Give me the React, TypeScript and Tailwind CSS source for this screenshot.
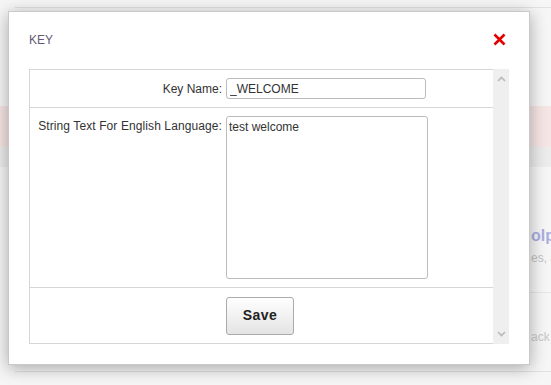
import { useState } from 'react'

function CloseIcon() {
  return (
    <svg width="13" height="13" viewBox="0 0 13 13">
      <path d="M1.5 1.5 L11.5 11.5 M11.5 1.5 L1.5 11.5" stroke="#e30000" strokeWidth="2.6" strokeLinecap="butt" />
    </svg>
  )
}

function Chevron({ up }: { up?: boolean }) {
  return (
    <svg width="9" height="6" viewBox="0 0 9 6">
      <path
        d={up ? 'M1 5 L4.5 1.5 L8 5' : 'M1 1 L4.5 4.5 L8 1'}
        fill="none"
        stroke="#b9b9b9"
        strokeWidth="1.6"
      />
    </svg>
  )
}

export default function App() {
  const [keyName, setKeyName] = useState('_WELCOME')
  const [text, setText] = useState('test welcome')

  return (
    <div className="relative w-[551px] h-[385px] overflow-hidden bg-[#f6f6f6] font-['Liberation_Sans',Arial,sans-serif] text-[12px] text-[#333]">
      {/* ============ PAGE BEHIND ============ */}
      <div className="h-[7px]" />
      <div className="ml-[15px] border-t border-[#e2e2e2]" />
      <div className="h-[98px]" />
      <div className="h-[41px] bg-[#f6e5e5]" />
      <div className="h-[20px] bg-[#ececec]" />
      <div className="h-[60px]" />
      <div className="pl-[531px] whitespace-nowrap text-[16px] font-bold leading-[18px] text-[#a8aee2]">olp</div>
      <div className="pl-[531px] pt-[6px] whitespace-nowrap leading-[14px] text-[#c2c2c2]">es, a</div>
      <div className="h-[27px]" />
      <div className="ml-[530px] border-t border-[#e6e6e6]" />
      <div className="pl-[531px] pt-[37px] whitespace-nowrap leading-[14px] text-[#c8c8c8]">ack</div>
      <div className="h-[27px]" />
      <div className="ml-[15px] border-t border-[#e2e2e2]" />

      {/* ============ MODAL ============ */}
      <div className="absolute left-[8px] top-[11px] w-[522px] h-[354px] bg-white border border-[#c9c9c9] shadow-[0_3px_16px_rgba(0,0,0,0.32)] px-[20px]">
        <div className="h-[57px] flex justify-between pt-[21px]">
          <span className="text-[12px] leading-[14px] text-[#625a74]">KEY</span>
          <span className="mr-[3px]">
            <CloseIcon />
          </span>
        </div>

        <div className="flex h-[275px]">
          <div className="flex-1 flex flex-col border border-r-0 border-[#d6d6d6]">
            <div className="h-[38px] flex items-center border-b border-[#d6d6d6]">
              <label className="w-[192px] text-right">Key Name:</label>
              <input
                value={keyName}
                onChange={e => setKeyName(e.target.value)}
                className="ml-[4px] w-[200px] h-[21px] px-[3px] border border-[#bcbcbc] rounded-[3px] text-[12px] text-[#333] outline-none"
              />
            </div>
            <div className="h-[180px] flex items-start pt-[8px] border-b border-[#d6d6d6]">
              <label className="w-[192px] text-right pt-[3px] leading-[14px] tracking-[0.1px]">String Text For English Language:</label>
              <textarea
                value={text}
                onChange={e => setText(e.target.value)}
                className="ml-[4px] w-[202px] h-[163px] px-[2px] py-[3px] border border-[#bcbcbc] rounded-[3px] text-[12px] leading-[14px] text-[#333] resize-none outline-none"
              />
            </div>
            <div className="flex-1 flex items-center">
              <div className="w-[196px]" />
              <button className="w-[68px] h-[38px] rounded-[3px] border border-[#ababab] bg-gradient-to-b from-white to-[#e4e4e4] text-[14px] font-bold tracking-[0.4px] text-[#222]">
                Save
              </button>
            </div>
          </div>
          <div className="w-[16px] bg-[#efefef] flex flex-col justify-between items-center py-[7px]">
            <Chevron up />
            <Chevron />
          </div>
        </div>
      </div>
    </div>
  )
}
